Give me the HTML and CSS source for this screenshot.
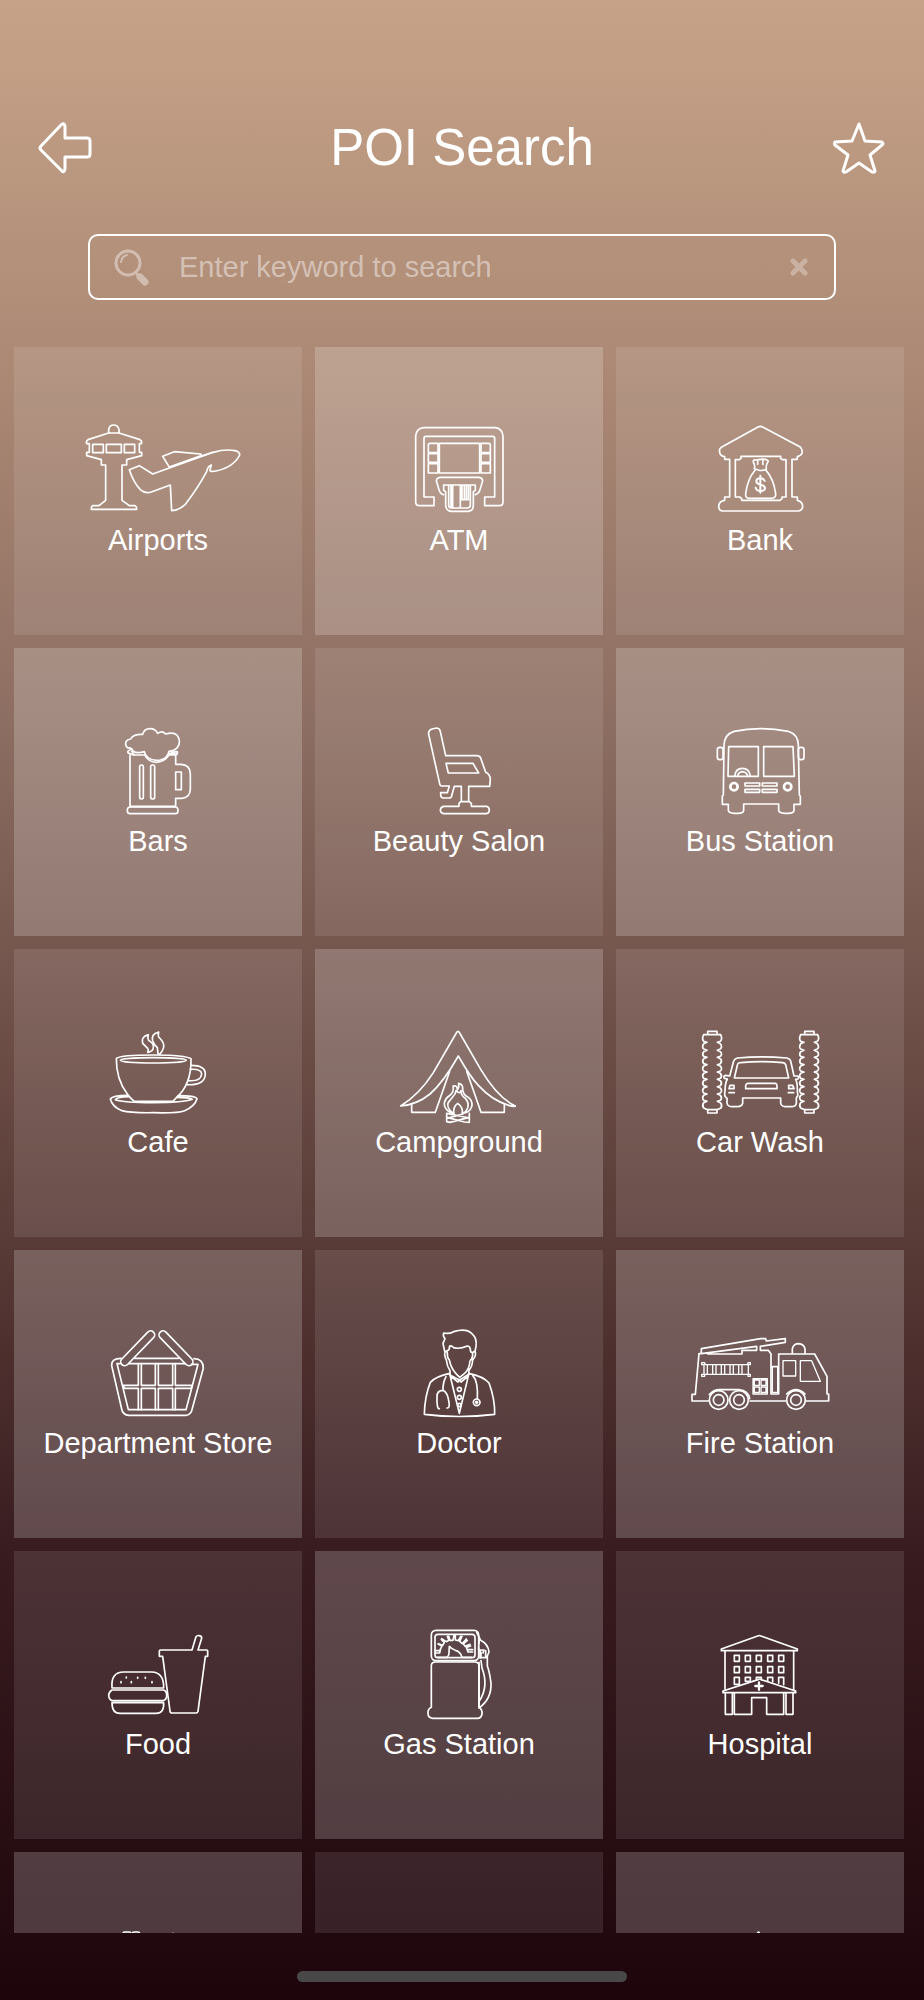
FILE: index.html
```html
<!DOCTYPE html>
<html lang="en">
<head>
    <meta charset="UTF-8">
    <meta name="viewport" content="width=device-width, initial-scale=1.0">
    <title>POI Search</title>
    <link rel="stylesheet" href="styles.css">
</head>
<body>
    <header class="header">
        <button type="button" class="nav-btn" aria-label="Back">
            <svg viewBox="0 0 56 54"><path d="M27 17V5Q26 1 23 4L3 25Q1 27 3 29L23 49Q26 53 27 48V36H49Q52 36 52 33V20Q52 17 49 17Z"/></svg>
        </button>
        <h1>POI Search</h1>
        <button type="button" class="nav-btn" aria-label="Favorites">
            <svg viewBox="0 0 56 54"><path d="M29 3L35 20L52 21Q54 23 52 24L40 34L45 50Q44 52 42 51L29 42L16 51Q14 52 13 50L18 34L5 24Q4 23 5 21L22 20Z"/></svg>
        </button>
    </header>

    <form class="search" onsubmit="return false;">
        <label for="keyword" aria-label="Keyword">
            <svg class="magnifier" viewBox="0 0 36 38">
                <circle cx="14" cy="15" r="12" stroke-width="3"/>
                <path d="M7 14Q8 8 13 7" stroke-width="2"/>
                <path d="M23 26L25 29" stroke-width="3"/>
                <path d="M26 29L31 34" stroke-width="7"/>
            </svg>
        </label>
        <input type="text" id="keyword" placeholder="Enter keyword to search">
        <button type="reset" class="clear" aria-label="Clear">
            <svg viewBox="0 0 22 22"><path d="M5 5L17 17M17 5L5 17"/></svg>
        </button>
    </form>

    <main class="grid">
        <button type="button" class="tile">
            <svg class="icon" viewBox="-6 33 540 300">
                <path d="M116 66V56Q118 42 131 42Q144 42 147 56V66Z"/>
                <path d="M116 66L54 86Q47 90 50 98H58V124H50V134L94 146V162H107V268L87 284H68Q63 288 64 295H200Q201 288 195 284H178L156 268V162H170V146L215 134V124H208V98H214Q217 89 210 86L147 66"/>
                <path d="M68 100H100V125H68ZM109 100H154V125H109ZM163 100H194V125H163Z"/>
                <path d="M178 176L208 164L248 189L300 170L430 124Q465 113 495 119Q510 123 509 132Q492 168 438 180Q418 184 420 176L424 162Q413 166 410 182Q382 234 345 281Q325 299 305 299L301 222L244 243Q225 249 211 236Q190 213 178 176Z"/>
                <path d="M297 167L278 136L313 122L392 129Q396 131 392 134L300 167L428 124"/>
            </svg>
            <span>Airports</span>
        </button>
        <button type="button" class="tile">
            <svg class="icon" viewBox="-33 33 540 300">
                <path d="M162 258V284H119Q107 284 107 273V75Q110 51 132 50H345Q367 52 369 75V273Q369 284 358 284H314V258H344V82Q344 76 338 76H138Q132 76 132 82V258Z"/>
                <rect x="178" y="97" width="121" height="89"/>
                <path d="M174 97H150Q145 97 145 102V125H174ZM145 128H174V154H145ZM145 158H174V186H145ZM303 97H326Q331 97 331 102V125H303ZM303 128H331V154H303ZM303 158H331V186H303Z"/>
                <path d="M191 251Q181 249 177 236L169 209Q170 200 181 199H297Q307 200 308 209L300 236Q297 248 286 251M286 222V238L280 242V285Q279 300 264 301H213Q199 299 197 285V242L191 238V222ZM206 224V286Q208 291 216 291H262Q270 290 271 284V224M213 224V289M218 224V289M241 224V289M246 224V266H265V224M253 224V266M259 224V266"/>
            </svg>
            <span>ATM</span>
        </button>
        <button type="button" class="tile">
            <svg class="icon" viewBox="-60 33 540 300">
                <path d="M104 145V137Q86 135 89 115L94 109L204 48Q211 44 218 48L332 109Q345 131 322 137V145H306V258H322V268Q339 272 338 289Q334 300 325 300H98Q86 299 86 286Q87 270 104 268V258H119V145Z"/>
                <path d="M153 136H272V142L277 146H288V258H276V263L270 268H155V263L149 258H136V146H148L153 142Z"/>
                <path d="M193 173Q196 161 190 154Q188 145 199 147L211 145Q229 143 235 150Q227 162 229 175Q217 180 208 178ZM203 148V160M220 146Q217 152 219 160"/>
                <path d="M195 178Q172 205 167 249Q166 262 178 262H246Q258 261 257 248Q251 203 228 178"/>
                <path d="M224 210Q221 202 211 202Q199 202 199 211Q199 218 211 221Q225 224 225 232Q224 240 211 240Q199 240 197 230M211 194V245" stroke-width="6"/>
            </svg>
            <span>Bank</span>
        </button>
        <button type="button" class="tile">
            <svg class="icon" viewBox="-96 36 540 300">
                <path d="M99 120Q95 109 84 111Q74 104 78 92Q82 85 92 84Q99 69 128 70Q133 53 150 53Q166 53 173 67Q187 58 197 69Q225 61 234 77Q243 94 233 108Q226 119 207 121Q202 142 181 147Q158 151 144 140Q134 132 133 122Q111 129 99 120Z"/>
                <path d="M91 116L83 121Q83 128 91 128L100 132H134Q144 152 168 154Q193 153 207 132H226Q234 130 232 122L215 124M95 121L103 132M208 127L225 128"/>
                <path d="M90 132V286H227V262H245Q270 261 271 235V188Q270 161 243 160H227V132M227 183H244V236H227Z"/>
                <rect x="119" y="162" width="11" height="102" rx="5"/>
                <rect x="152" y="162" width="12" height="102" rx="5"/>
                <rect x="82" y="288" width="152" height="20" rx="9"/>
            </svg>
            <span>Bars</span>
        </button>
        <button type="button" class="tile">
            <svg class="icon" viewBox="807 36 540 300">
                <path d="M986 70Q984 58 996 54L1010 51Q1020 52 1021 62L1037 134H1130Q1139 134 1142 141L1157 184Q1170 190 1171 205L1169 226H1106V270L1114 277V286H1160Q1168 289 1168 298Q1167 308 1158 308H1032Q1021 306 1021 297Q1022 288 1031 286H1077V277L1084 270V226H1063L1054 258L1050 261H1028Q1021 260 1022 245H1042L1048 225H1025Q1020 225 1019 218Z"/>
                <path d="M1038 157H1119L1136 186H1045ZM1084 272H1106"/>
            </svg>
            <span>Beauty Salon</span>
        </button>
        <button type="button" class="tile">
            <svg class="icon" viewBox="-60 21 540 300">
                <path d="M102 88Q103 55 132 46Q210 30 295 46Q324 56 325 86L328 237L331 240V265H312V283Q311 292 294 292H284Q266 291 266 283V264H161V283Q160 292 144 292H133Q115 291 115 283V265H97V240L100 237Z"/>
                <rect x="82" y="94" width="17" height="37" rx="7"/>
                <rect x="325" y="94" width="17" height="37" rx="7"/>
                <path d="M116 92H205V181H114ZM221 92H309L313 181H221ZM134 180Q137 157 157 157Q178 157 181 180M143 180Q145 168 157 167Q170 168 173 180"/>
                <circle cx="132" cy="212" r="11" stroke-width="8"/>
                <circle cx="293" cy="212" r="11" stroke-width="8"/>
                <path d="M165 201H209V210H165ZM217 201H261V210H217ZM165 220H209V229H165ZM217 220H261V229H217Z"/>
            </svg>
            <span>Bus Station</span>
        </button>
        <button type="button" class="tile">
            <svg class="icon" viewBox="-66 24 540 300">
                <path d="M175 56Q152 62 158 82L173 97Q177 102 173 109Q191 105 190 94Q192 83 176 73Q172 65 175 56ZM206 48Q183 54 188 74Q191 84 202 95L204 114H210Q223 99 221 86Q220 77 206 63Q204 56 206 48Z"/>
                <path d="M79 127Q93 117 190 117Q286 117 303 128Q305 205 258 246L249 256H133Q121 247 112 234Q78 190 79 127Z"/>
                <ellipse cx="190" cy="133" rx="99" ry="8"/>
                <path d="M303 148Q346 148 346 174Q345 209 290 206M301 160Q334 158 335 174Q333 197 295 194"/>
                <path d="M113 238Q68 238 61 249Q67 273 96 284Q120 291 190 290Q263 292 284 284Q315 270 321 248Q316 239 264 239M116 242Q82 243 76 251Q101 260 190 260Q281 260 307 250Q299 244 261 244"/>
            </svg>
            <span>Cafe</span>
        </button>
        <button type="button" class="tile">
            <svg class="icon" viewBox="837 24 540 300">
                <path d="M932 270Q988 236 1030 170L1099 51Q1104 41 1109 51L1172 160Q1224 246 1276 270Q1272 273 1256 268Q1206 253 1165 208Q1140 182 1105 120Q1060 199 1020 234Q981 266 932 270Z"/>
                <path d="M1079 166L1036 289H965V264M1130 166L1173 289H1243V264"/>
                <path d="M1084 291Q1061 280 1063 260Q1067 246 1080 238Q1094 225 1089 210Q1102 207 1102 221Q1108 215 1106 202Q1119 204 1118 220Q1119 236 1132 242Q1147 251 1146 268Q1143 285 1125 291M1088 291Q1070 276 1074 261Q1080 252 1088 243Q1097 235 1098 224Q1110 236 1113 224Q1112 238 1126 247Q1138 260 1133 276Q1129 287 1120 291M1092 293Q1088 273 1103 262Q1122 276 1116 293"/>
                <path d="M1070 292L1138 306V319L1124 318L1070 304ZM1138 292V304L1080 319L1070 317V307L1119 294"/>
            </svg>
            <span>Campground</span>
        </button>
        <button type="button" class="tile">
            <svg class="icon" viewBox="-60 24 540 300">
                <path id="brush" d="M53 46H81V56H92Q98 69 91 76L82 79L91 83Q98 92 91 99L82 103L91 107Q98 115 91 121L82 124L91 128Q98 136 91 143L82 146L91 150Q98 158 91 165L82 168L91 172Q98 180 91 187L82 190L91 194Q98 202 91 209L82 212L91 216Q98 224 91 231L82 234L91 238Q98 246 91 253L82 256L91 260Q98 268 93 276L81 281V291H53V281L41 276Q35 268 41 260L51 256L41 253Q35 246 41 238L51 234L41 231Q35 224 41 216L51 212L41 209Q35 202 41 194L51 190L41 187Q35 180 41 172L51 168L41 165Q35 158 41 150L51 146L41 143Q35 136 41 128L51 124L41 121Q35 115 41 107L51 103L41 99Q35 92 41 83L51 79L41 76Q35 69 41 56H53ZM53 56H81M53 281H81"/>
                <use href="#brush" x="291"/>
                <path d="M119 180L131 135Q134 128 142 126Q215 119 291 126Q300 128 302 135L312 180H323Q329 184 323 189L317 190Q323 202 322 228Q326 240 319 245V262Q317 272 304 272H286Q273 271 272 261V246H158V262Q155 272 143 272H125Q112 271 111 261V247Q101 242 105 226Q105 202 112 189L103 187Q99 180 107 178ZM133 186L143 144Q145 140 152 140Q215 134 278 140Q285 141 287 146L296 186Z"/>
                <path d="M173 202H256Q261 203 261 210V218H167V209Q168 203 173 202ZM120 208H132V218H117ZM296 208H308L312 218H296ZM117 230H133M295 230H311"/>
            </svg>
            <span>Car Wash</span>
        </button>
        <button type="button" class="tile">
            <svg class="icon" viewBox="-66 27 540 300">
                <rect x="75" y="85" width="136" height="24" rx="12" transform="rotate(-46 143 97)"/>
                <rect x="190" y="85" width="136" height="24" rx="12" transform="rotate(46 258 97)"/>
                <path d="M93 127Q64 127 65 149L95 279Q98 297 117 298H288Q301 296 305 284L340 157Q340 128 312 128M81 143H90M117 143H286M305 145H324L288 281H115L81 143M134 127H266"/>
                <path d="M145 143V208H98L104 217H145V281M154 143V208H196V143M154 281V217H196V281M205 143V208H248V143M205 281V217H248V281M256 143V208H306L304 217H256V281"/>
            </svg>
            <span>Department Store</span>
        </button>
        <button type="button" class="tile">
            <svg class="icon" viewBox="837 27 540 300">
                <path d="M1064 106L1059 82L1065 68Q1058 61 1061 51Q1076 55 1091 47Q1128 36 1145 52Q1162 67 1158 91L1155 106"/>
                <path d="M1071 105Q1079 102 1079 90Q1086 89 1091 95Q1110 100 1132 90Q1141 89 1142 107L1147 110M1066 106Q1070 103 1072 111Q1071 125 1078 132Q1083 157 1098 173L1109 184L1123 173Q1138 160 1140 135Q1149 126 1148 111Q1153 102 1156 109Q1159 120 1148 132Q1147 152 1137 162L1136 175L1115 188L1109 192L1098 187L1080 177V164Q1071 151 1069 132Q1061 116 1066 106Z"/>
                <path d="M1079 172Q1037 181 1021 199Q1004 242 1003 295Q1107 308 1214 295Q1215 249 1197 201Q1180 181 1136 172M1079 174L1108 292L1136 176M1085 183L1104 198L1108 192L1113 198L1131 183"/>
                <path d="M1068 182Q1058 201 1059 223M1048 278Q1040 280 1041 242Q1041 223 1059 223Q1073 229 1077 259Q1080 277 1071 276M1148 178Q1165 196 1162 249"/>
                <circle cx="1160" cy="259" r="10"/><circle cx="1160" cy="259" r="3"/>
                <circle cx="1108" cy="220" r="6"/><circle cx="1108" cy="244" r="6"/><circle cx="1108" cy="267" r="5"/>
            </svg>
            <span>Doctor</span>
        </button>
        <button type="button" class="tile">
            <svg class="icon" viewBox="-30 12 540 300">
                <path d="M64 98V83L242 53H257L259 60L316 53V64L241 76L241 88H265L273 99V219H296V99H337V83Q341 68 356 68Q371 69 375 83V99H404L441 166V219H446V240H377M317 240H210M87 240H36V220H46L57 98H64L230 76V88H186V99H83M273 137H296M337 99H375"/>
                <circle cx="116" cy="237" r="28"/><circle cx="116" cy="237" r="16"/>
                <circle cx="177" cy="237" r="28"/><circle cx="177" cy="237" r="16"/>
                <circle cx="348" cy="237" r="28"/><circle cx="348" cy="237" r="16"/>
                <path d="M88 221Q101 206 118 206H177Q205 209 209 233M320 219Q348 193 375 219"/>
                <path d="M65 125H74L76 131H202L204 125H211V131H205V160H211V166H204V160H74V166H65V160H72V131H65ZM82 131V160M98 131V160M108 131V160M124 131V160M134 131V160M150 131V160M160 131V160M176 131V160M186 131V160" stroke-width="4"/>
                <path d="M219 173H262V219H219ZM223 177H238V193H223ZM243 177H258V193H243ZM223 198H238V214H223ZM243 198H258V214H243ZM277 137V214H293V137M309 119H347V165H309ZM361 119H395L421 181H361Z" stroke-width="4"/>
            </svg>
            <span>Fire Station</span>
        </button>
        <button type="button" class="tile">
            <svg class="icon" viewBox="-66 30 540 300">
                <path d="M208 105Q208 102 212 102H306L318 62Q322 57 328 59Q336 61 335 67L324 102H350Q354 103 353 107V121H346L324 286Q323 291 318 291H246Q240 291 240 285L218 121H208Z"/>
                <path d="M66 216Q62 168 101 168H185Q222 169 221 216ZM66 222H221Q231 227 230 239Q230 250 220 254H66Q56 250 56 238Q57 227 66 222ZM66 260H221Q223 292 198 292H90Q66 292 66 260Z"/>
                <path d="M93 197V200M109 183V186M124 197V200M143 184V187M166 184V187M186 197V200"/>
            </svg>
            <span>Food</span>
        </button>
        <button type="button" class="tile">
            <svg class="icon" viewBox="837 30 540 300">
                <rect x="1024" y="43" width="142" height="91" rx="14"/>
                <rect x="1035" y="55" width="120" height="70" rx="9"/>
                <path d="M1024 274V148Q1025 138 1036 138H1154Q1166 138 1167 148V274Q1177 280 1176 294Q1174 307 1162 307H1028Q1014 306 1014 292Q1013 279 1024 274Z"/>
                <path d="M1036 111H1049Q1050 98 1056 90L1044 84M1045 83L1058 88L1063 80L1054 70M1055 68L1069 77L1077 73L1072 61M1076 60L1080 73H1089L1092 58M1096 58V72L1105 74L1112 61M1116 61L1109 76L1117 83L1129 69M1132 73L1120 84L1126 91L1140 85M1142 90L1129 94L1134 108H1148M1036 104H1048M1148 101H1134M1071 125Q1078 117 1077 110L1078 91Q1084 99 1096 103Q1112 107 1116 124H1145M1042 124H1071"/>
                <path d="M1160 49L1172 73Q1194 84 1197 108L1192 120V150Q1198 165 1203 201Q1205 249 1167 276M1166 91V102H1182L1179 111M1170 127V102M1187 104V125H1173V109M1167 73V84M1173 134L1176 156Q1197 211 1168 255M1167 139V274"/>
            </svg>
            <span>Gas Station</span>
        </button>
        <button type="button" class="tile">
            <svg class="icon" viewBox="1740 30 540 300">
                <path d="M1894 99L2003 60Q2008 57 2013 60L2122 99V104H1894ZM1905 104V218M2111 104V222M1899 230V225L2004 191Q2008 187 2013 191L2117 225V230ZM1906 230V295H1927V230M1933 230V295H1985V245H2030V295H2081V230M2088 230V295H2109V230"/>
                <path d="M1933 118H1948V136H1933ZM1966 118H1981V136H1966ZM1999 118H2014V136H1999ZM2033 118H2048V136H2033ZM2066 118H2081V136H2066ZM1933 152H1948V170H1933ZM1966 152H1981V170H1966ZM1999 152H2014V170H1999ZM2033 152H2048V170H2033ZM2066 152H2081V170H2066ZM1948 205H1933V184H1948V204M1981 196H1966V184H1981V193M1999 189V184H2014V189M2033 194V184H2048V198M2066 202V184H2081V206"/>
                <path d="M2007 199V221M1996 210H2018" stroke-width="7"/>
            </svg>
            <span>Hospital</span>
        </button>
        <button type="button" class="tile">
            <svg class="icon" viewBox="0 0 540 300">
                <path d="M165 34V20Q165 15 170 15H184Q189 15 189 20V34M193 34V20Q193 15 198 15H210Q215 15 215 20V34M312 30V23L315 19L318 23V30"/>
            </svg>
        </button>
        <button type="button" class="tile"></button>
        <button type="button" class="tile">
            <svg class="icon" viewBox="0 0 540 300">
                <path d="M256 40L263 18Q265 12 268 18L275 40"/>
            </svg>
        </button>
    </main>

    <footer class="footer">
        <div class="home-bar"></div>
    </footer>
</body>
</html>
```
FILE: styles.css
```css
* {
    box-sizing: border-box;
}

body {
    font-family: "Liberation Sans", Arial, sans-serif;
    color: #fff;
    margin: 0;
    height: 100vh;
    display: flex;
    flex-direction: column;
    overflow: hidden;
    background: linear-gradient(#c6a388 0%, #ae8b76 17%, #8d6e62 36%, #6b4c45 53%, #4c2f2d 68%, #381b1f 78%, #260d12 93%, #1e050c 100%);
}

button {
    font: inherit;
    color: inherit;
    background: none;
    border: none;
    padding: 0;
    cursor: pointer;
}

svg {
    display: block;
    fill: none;
    stroke: #fff;
    stroke-linecap: round;
    stroke-linejoin: round;
}

/* Top bar */
.header {
    display: flex;
    align-items: center;
    justify-content: space-between;
    padding: 112px 38px 0;
}

.header h1 {
    margin: 0;
    font-size: 51px;
    font-weight: 400;
    line-height: 72px;
}

.nav-btn svg {
    width: 56px;
    height: 54px;
    stroke-width: 3;
}

/* Search box */
.search {
    display: flex;
    align-items: center;
    height: 66px;
    margin: 50px 88px 47px;
    padding: 0 24px;
    border: 2px solid #fff;
    border-radius: 10px;
}

.magnifier {
    width: 36px;
    height: 38px;
    opacity: 0.4;
}

.search input {
    flex: 1;
    min-width: 0;
    margin-left: 29px;
    padding: 0;
    font: inherit;
    font-size: 29px;
    color: #fff;
    background: none;
    border: none;
    outline: none;
}

.search input::placeholder {
    color: rgba(255, 255, 255, 0.45);
    opacity: 1;
}

.clear svg {
    width: 22px;
    height: 22px;
    stroke-width: 5;
    opacity: 0.3;
}

/* Category tiles */
.grid {
    flex: 1;
    min-height: 0;
    overflow: hidden;
    display: grid;
    grid-template-columns: repeat(3, 1fr);
    grid-auto-rows: max-content;
    gap: 13px;
    padding: 0 20px 0 14px;
}

.tile {
    display: flex;
    flex-direction: column;
    align-items: center;
    gap: 1px;
    aspect-ratio: 1;
    padding-top: 75px;
    font-size: 29px;
    line-height: 34px;
    background: rgba(255, 255, 255, 0.1);
}

.tile:nth-child(even) {
    background: rgba(255, 255, 255, 0.2);
}

.icon {
    width: 180px;
    height: 100px;
    stroke-width: 5;
    overflow: visible;
}

/* Bottom bar */
.footer {
    display: flex;
    justify-content: center;
    height: 67px;
    padding-top: 38px;
}

.home-bar {
    width: 330px;
    height: 11px;
    border-radius: 6px;
    background: #484848;
}
```
